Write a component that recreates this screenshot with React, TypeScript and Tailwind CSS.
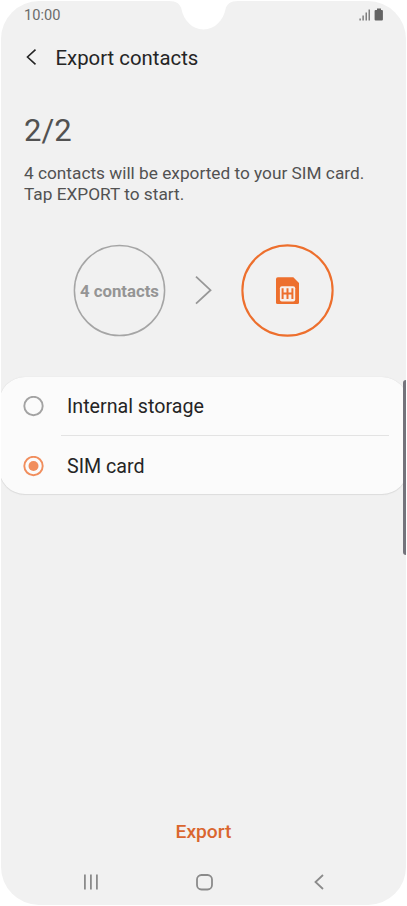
import { useState, type ReactNode } from "react";

const OPTIONS = ["Internal storage", "SIM card"];

function Notch() {
  return (
    <svg
      className="absolute left-[165px] top-0"
      width="78"
      height="30"
      viewBox="0 0 78 30"
      fill="#fff"
    >
      <path d="M4 0V1C11.500 1 15 4 16.300 8.500C18.500 20 27 29.500 38.500 29.500C50 29.500 58.500 20 60.700 8.500C62 4 65.500 1 73 1V0Z" />
    </svg>
  );
}

function StatusBar() {
  return (
    <div className="flex h-7 items-center justify-between pl-[23px] pr-[22px]">
      <span className="text-[14.6px] leading-7 text-[#6b6b6b]">10:00</span>
      <svg width="25" height="14" viewBox="0 0 25 14" fill="#636363">
        <rect x="0.500" y="10.500" width="1.200" height="2" />
        <rect x="3.500" y="7.500" width="1.200" height="5" />
        <rect x="6.600" y="4.500" width="1.200" height="8" />
        <rect x="9.600" y="1.500" width="1.200" height="11" />
        <path d="M18 .5h4V2h.9a1 1 0 0 1 1 1v8.500a1 1 0 0 1-1 1h-6.300a1 1 0 0 1-1-1V3a1 1 0 0 1 1-1h1.400z" />
      </svg>
    </div>
  );
}

function Ring({ color, width, children }: { color: string; width: number; children: ReactNode }) {
  return (
    <div className="grid size-[94px] place-items-center">
      <svg
        className="col-start-1 row-start-1"
        width="94"
        height="94"
        viewBox="0 0 94 94"
        fill="none"
      >
        <circle cx="46.500" cy="46.500" r="45.100" stroke={color} strokeWidth={width} />
      </svg>
      <div className="col-start-1 row-start-1">{children}</div>
    </div>
  );
}

function SimIcon() {
  return (
    <svg width="24" height="28" viewBox="0 0 24 28" fill="none">
      <path
        d="M1.800 .3h15.500L23 6V25.500a1.500 1.500 0 0 1-1.500 1.500H1.500A1.500 1.500 0 0 1 0 25.500V2.100A1.800 1.800 0 0 1 1.800 .3z"
        fill="#ed6f2d"
      />
      <rect x="3.900" y="9.200" width="15.300" height="15.200" rx="2" fill="#f7efea" />
      <path
        d="M6.600 11.300v10.800M11.500 11.300v10.800M16.400 11.300v10.800M6.600 16.500h9.800"
        stroke="#ed6f2d"
        strokeWidth="2"
      />
    </svg>
  );
}

function Radio({ checked }: { checked: boolean }) {
  const color = checked ? "#f18e5d" : "#a3a3a3";
  return (
    <svg width="21" height="21" viewBox="0 0 21 21" fill="none">
      <circle cx="10.500" cy="10" r="9.200" stroke={color} strokeWidth="1.900" />
      {checked && <circle cx="10.500" cy="10" r="5" fill={color} />}
    </svg>
  );
}

export default function App() {
  const [target, setTarget] = useState("SIM card");

  return (
    <div className="h-[906px] w-[407px] bg-white p-px font-['Roboto',sans-serif]">
      <div className="flex h-[904px] w-[405px] flex-col overflow-hidden rounded-[38px] bg-[#f1f1f1]">
        <StatusBar />

        <header className="flex h-14 items-center pl-[25px]">
          <button type="button" aria-label="Back">
            <svg width="12" height="17" viewBox="0 0 12 17" fill="none">
              <path d="M9.500 .7L1.500 8l8 7.300" stroke="#252525" strokeWidth="1.600" />
            </svg>
          </button>
          <h1 className="ml-[17.5px] pt-px text-[20.35px] leading-7 text-[#252525]">
            Export contacts
          </h1>
        </header>

        <section className="mt-[26px] pl-[23px] text-[#525252]">
          <h2 className="text-[31px] leading-10">2/2</h2>
          <p className="mt-[12px] whitespace-nowrap text-[17.25px] leading-[20.5px]">
            4 contacts will be exported to your SIM card.
            <br />
            Tap EXPORT to start.
          </p>
        </section>

        <section className="mt-10 flex h-[92px] items-start pl-[72px]">
          <Ring color="#a5a5a5" width={1.5}>
            <span className="block pr-px pt-px text-[16.75px] font-bold whitespace-nowrap text-[#959595]">
              4 contacts
            </span>
          </Ring>
          <svg
            className="ml-[27.5px] mt-[31px]"
            width="18"
            height="30"
            viewBox="0 0 18 30"
            fill="none"
          >
            <path d="M1 1.700L15.500 15.200 1 28.700" stroke="#979797" strokeWidth="1.800" />
          </svg>
          <div className="ml-[28.5px]">
            <Ring color="#ed6f2d" width={2.1}>
              <SimIcon />
            </Ring>
          </div>
        </section>

        <ul className="-mx-0.5 mt-[41px] h-[117px] shrink-0 rounded-[26px] bg-[#fbfbfb] shadow-[0_0_1px_#d0d0d0,0_1px_1px_#dddddd]">
          {OPTIONS.map((label, i) => (
            <li key={label}>
              <label className="flex h-[58px] items-center pl-[24px]">
                <input
                  type="radio"
                  name="target"
                  className="sr-only"
                  checked={target === label}
                  onChange={() => setTarget(label)}
                />
                <Radio checked={target === label} />
                <span className="ml-[23px] pt-0.5 text-[19.65px] leading-7 text-[#252525]">
                  {label}
                </span>
              </label>
              {i === 0 && <div className="mb-px ml-[62px] mr-[19px] h-px bg-[#e3e3e3]" />}
            </li>
          ))}
        </ul>

        <button
          type="button"
          className="mt-auto self-center text-[19.2px] font-medium leading-7 text-[#da662f]"
        >
          Export
        </button>

        <nav className="mt-[24px] flex h-[35px] items-start pl-[82px] pt-[4px]">
          <svg width="16" height="16" viewBox="0 0 16 16" fill="none">
            <path d="M1.900 .5v15M7.900 .5v15M13.900 .5v15" stroke="#8b8b8b" strokeWidth="1.800" />
          </svg>
          <svg className="ml-[97px]" width="17" height="17" viewBox="0 0 17 17" fill="none">
            <rect x="1" y="1" width="15" height="14.500" rx="4.500" stroke="#8b8b8b" strokeWidth="1.800" />
          </svg>
          <svg className="ml-[100.5px]" width="10" height="16" viewBox="0 0 10 16" fill="none">
            <path d="M9 1L1.500 8 9 15" stroke="#8b8b8b" strokeWidth="1.800" />
          </svg>
        </nav>
      </div>

      <Notch />
      {/* edge panel handle */}
      <div className="absolute left-[403px] top-[380px] h-[175px] w-[3px] rounded-l-[3px] bg-[#73737b]" />
    </div>
  );
}
